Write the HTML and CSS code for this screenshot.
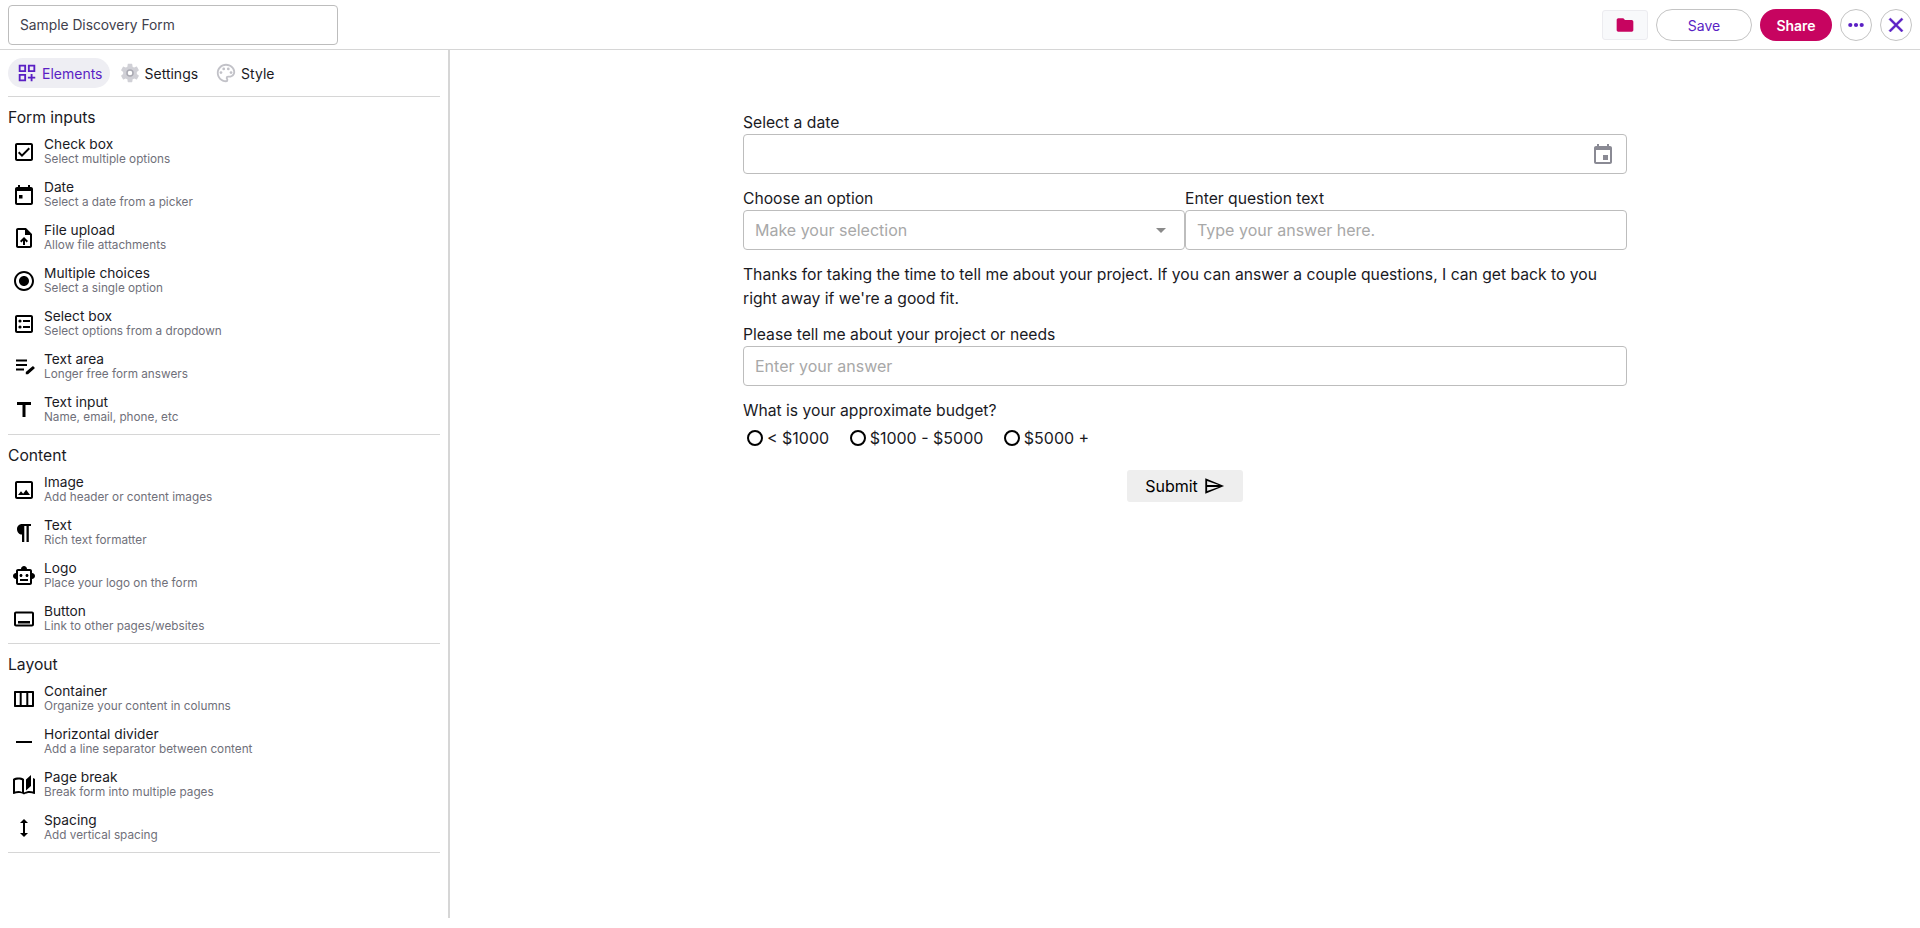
FILE: index.html
```html
<!DOCTYPE html>
<html lang="en">
<head>
<meta charset="utf-8">
<title>Sample Discovery Form</title>
<link rel="stylesheet" href="styles.css">
</head>
<body>
<div class="app">
  <header class="topbar">
    <input class="title-input" type="text" value="Sample Discovery Form">
    <div class="actions">
      <button class="folder-btn"><svg viewBox="0 0 24 24" class="i20"><path d="M10 4H4c-1.100 0-1.990.9-1.990 2L2 18c0 1.100.9 2 2 2h16c1.100 0 2-.9 2-2V8c0-1.100-.9-2-2-2h-8l-2-2z"/></svg></button>
      <button class="save-btn">Save</button>
      <button class="share-btn">Share</button>
      <button class="circle-btn"><svg viewBox="0 0 24 24" class="i24"><circle cx="6.300" cy="12" r="2.100"/><circle cx="12" cy="12" r="2.100"/><circle cx="17.700" cy="12" r="2.100"/></svg></button>
      <button class="circle-btn"><svg viewBox="0 0 24 24" class="i24 thick"><path d="M19 6.410 17.590 5 12 10.590 6.410 5 5 6.410 10.590 12 5 17.590 6.410 19 12 13.410 17.590 19 19 17.590 13.410 12z"/></svg></button>
    </div>
  </header>
  <div class="workspace">
    <aside class="sidebar">
      <nav class="tabs">
        <a class="tab active"><svg viewBox="0 0 24 24" class="i22"><path d="M3 3h8v8H3zm2 2v4h4V5zM3 13h8v8H3zm2 2v4h4v-4zM13 3h8v8h-8zm2 2v4h4V5zM16 13h2v3h3v2h-3v3h-2v-3h-3v-2h3z" fill-rule="evenodd"/></svg>Elements</a>
        <a class="tab"><svg viewBox="0 0 24 24" class="i22 gear"><path d="M19.400 13c.04-.32.1-.66.1-1s-.06-.68-.1-1l2.100-1.650c.2-.15.25-.42.12-.64l-2-3.460c-.12-.22-.39-.3-.61-.22l-2.490 1c-.52-.4-1.060-.73-1.690-.98l-.37-2.650A.506.506 0 0 0 14 2h-4c-.25 0-.46.18-.5.42l-.37 2.650c-.63.25-1.170.59-1.690.98l-2.490-1c-.22-.09-.49 0-.61.22l-2 3.460c-.13.22-.07.49.12.64L4.570 11c-.04.32-.07.66-.07 1s.03.68.07 1l-2.110 1.650c-.19.15-.25.42-.12.64l2 3.460c.12.22.39.3.61.22l2.490-1c.52.4 1.060.73 1.690.98l.37 2.650c.04.24.25.42.5.42h4c.25 0 .46-.18.5-.42l.37-2.650c.63-.25 1.170-.59 1.690-.98l2.490 1c.22.09.49 0 .61-.22l2-3.460c.12-.22.07-.49-.12-.64L19.400 13z"/><circle class="gear-hub" cx="12" cy="12" r="3.300"/></svg>Settings</a>
        <a class="tab"><svg viewBox="0 0 24 24" class="i22 gray"><path d="M12 22C6.490 22 2 17.510 2 12S6.490 2 12 2s10 4.040 10 9c0 3.310-2.690 6-6 6h-1.770c-.280 0-.5.220-.5.5 0 .120.050.230.130.330.410.470.640 1.060.640 1.670A2.500 2.500 0 0 1 12 22zm0-18c-4.410 0-8 3.590-8 8s3.590 8 8 8c.280 0 .5-.220.5-.5a.540.540 0 0 0-.140-.350c-.410-.460-.630-1.050-.630-1.650a2.500 2.500 0 0 1 2.500-2.500H16c2.210 0 4-1.790 4-4 0-3.860-3.590-7-8-7z"/><circle cx="6.500" cy="11.500" r="1.500"/><circle cx="9.500" cy="7.500" r="1.500"/><circle cx="14.500" cy="7.500" r="1.500"/><circle cx="17.500" cy="11.500" r="1.500"/></svg>Style</a>
      </nav>

      <section class="group">
        <h2>Form inputs</h2>
        <div class="item"><svg viewBox="0 0 24 24"><path d="M19 3H5c-1.100 0-2 .9-2 2v14c0 1.100.9 2 2 2h14c1.100 0 2-.9 2-2V5c0-1.100-.9-2-2-2zm0 16H5V5h14v14zM17.990 9l-1.410-1.420-6.590 6.590-2.580-2.570-1.420 1.410 4 3.990z"/></svg><div><b>Check box</b><small>Select multiple options</small></div></div>
        <div class="item"><svg viewBox="0 0 24 24"><path d="M19 4h-1V2h-2v2H8V2H6v2H5c-1.110 0-1.990.9-1.990 2L3 20c0 1.100.89 2 2 2h14c1.100 0 2-.9 2-2V6c0-1.100-.9-2-2-2zm0 16H5V8h14v12zM7 12h3.500v3.500H7z"/></svg><div><b>Date</b><small>Select a date from a picker</small></div></div>
        <div class="item"><svg viewBox="0 0 24 24"><path d="M14 2H6c-1.100 0-1.990.9-1.990 2L4 20c0 1.100.89 2 1.990 2H18c1.100 0 2-.9 2-2V8l-6-6zm4 18H6V4h7v5h5v11zM8 15.010l1.410 1.410L11 14.840V19h2v-4.160l1.590 1.590L16 15.010 12.010 11z"/></svg><div><b>File upload</b><small>Allow file attachments</small></div></div>
        <div class="item"><svg viewBox="0 0 24 24"><path d="M12 7c-2.760 0-5 2.240-5 5s2.240 5 5 5 5-2.240 5-5-2.240-5-5-5zm0-5C6.480 2 2 6.480 2 12s4.480 10 10 10 10-4.480 10-10S17.520 2 12 2zm0 18c-4.420 0-8-3.580-8-8s3.580-8 8-8 8 3.580 8 8-3.580 8-8 8z"/></svg><div><b>Multiple choices</b><small>Select a single option</small></div></div>
        <div class="item"><svg viewBox="0 0 24 24"><path d="M19 3H5c-1.100 0-2 .9-2 2v14c0 1.100.9 2 2 2h14c1.100 0 2-.9 2-2V5c0-1.100-.9-2-2-2zm0 16H5V5h14v14zM11 8h7v2h-7zm0 6h7v2h-7z"/><circle cx="8" cy="9" r="1.600"/><circle cx="8" cy="15" r="1.600"/></svg><div><b>Select box</b><small>Select options from a dropdown</small></div></div>
        <div class="item"><svg viewBox="0 0 24 24"><path d="M4 4.500h11v2H4zm0 4.500h11v2H4zm0 4.500h8v2H4zM21.500 11.500l1 1c.3.3.3.7 0 1l-6.500 5.800h-2.200v-2.300l6.500-5.500c.3-.3.9-.3 1.200 0z"/></svg><div><b>Text area</b><small>Longer free form answers</small></div></div>
        <div class="item"><svg viewBox="0 0 24 24"><path d="M5 4v3h5.500v12h3V7H19V4z"/></svg><div><b>Text input</b><small>Name, email, phone, etc</small></div></div>
      </section>

      <section class="group">
        <h2>Content</h2>
        <div class="item"><svg viewBox="0 0 24 24"><path d="M19 5v14H5V5h14m0-2H5c-1.100 0-2 .9-2 2v14c0 1.100.9 2 2 2h14c1.100 0 2-.9 2-2V5c0-1.100-.9-2-2-2zm-4.860 8.860l-3 3.870L9 13.140 6 17h12l-3.860-5.140z"/></svg><div><b>Image</b><small>Add header or content images</small></div></div>
        <div class="item"><svg viewBox="0 0 24 24"><path d="M10 13.500v7.500h2.300V5h2.200v16h2.300V5H19V3H10C7.200 3 5 5.200 5 8.200s2.200 5.300 5 5.300z"/></svg><div><b>Text</b><small>Rich text formatter</small></div></div>
        <div class="item"><svg viewBox="0 0 24 24"><path d="M20 9V7c0-1.100-.9-2-2-2h-3c0-1.660-1.340-3-3-3S9 3.340 9 5H6c-1.100 0-2 .9-2 2v2c-1.660 0-3 1.340-3 3s1.340 3 3 3v4c0 1.100.9 2 2 2h12c1.100 0 2-.9 2-2v-4c1.660 0 3-1.340 3-3s-1.340-3-3-3zm-2 10H6V7h12v12zm-9-6c-.83 0-1.500-.67-1.500-1.500S8.170 10 9 10s1.500.67 1.500 1.500S9.830 13 9 13zm7.500-1.500c0 .83-.67 1.500-1.500 1.500s-1.500-.67-1.500-1.500.67-1.500 1.500-1.500 1.500.67 1.500 1.500zM8 15h8v2H8v-2z"/></svg><div><b>Logo</b><small>Place your logo on the form</small></div></div>
        <div class="item"><svg viewBox="0 0 24 24"><path d="M20 4.500H4c-1.100 0-2 .9-2 2v11c0 1.100.9 2 2 2h16c1.100 0 2-.9 2-2v-11c0-1.100-.9-2-2-2zm0 13H4v-11h16zM6 14h12v2.500H6z"/></svg><div><b>Button</b><small>Link to other pages/websites</small></div></div>
      </section>

      <section class="group">
        <h2>Layout</h2>
        <div class="item"><svg viewBox="0 0 24 24"><path d="M3 4h18c.6 0 1 .4 1 1v14c0 .6-.4 1-1 1H3c-.6 0-1-.4-1-1V5c0-.6.4-1 1-1zm1 2v12h3.700V6zm5.700 0v12h4.600V6zm6.600 0v12H20V6z" fill-rule="evenodd"/></svg><div><b>Container</b><small>Organize your content in columns</small></div></div>
        <div class="item"><svg viewBox="0 0 24 24"><path d="M4 11h16v2H4z"/></svg><div><b>Horizontal divider</b><small>Add a line separator between content</small></div></div>
        <div class="item"><svg viewBox="0 0 24 24"><path d="M19 2l-5 4.500v11l5-4.500zM1 6v14.600c.1.400.4.500.8.400C3.200 20.400 5 20 6.500 20c1.900 0 4 .4 5.500 1.500 1.400-1 3.600-1.500 5.500-1.500 1.700 0 3.300.3 4.700 1 .4.200.8 0 .8-.4V6c-.6-.4-1.200-.7-2-1v13.500c-1-.3-2.300-.5-3.500-.5-1.700 0-4.100.6-5.500 1.500V6c-1.500-1.100-3.500-1.500-5.500-1.500S2.500 4.900 1 6zm2 1.200c1-.5 2.300-.7 3.500-.7 1.400 0 2.700.3 3.500.8V19c-1.100-.6-2.200-1-3.500-1-1.200 0-2.500.2-3.500.5z" fill-rule="evenodd"/></svg><div><b>Page break</b><small>Break form into multiple pages</small></div></div>
        <div class="item"><svg viewBox="0 0 24 24"><path d="M13 6.990h3L12 3 8 6.990h3v10.020H8L12 21l4-3.990h-3z"/></svg><div><b>Spacing</b><small>Add vertical spacing</small></div></div>
      </section>
    </aside>

    <main class="canvas">
      <form class="form">
        <div class="field">
          <label>Select a date</label>
          <div class="control"><input type="text"><svg viewBox="0 0 24 24" class="cal"><path d="M19 4h-1V2h-2v2H8V2H6v2H5c-1.110 0-1.990.9-1.990 2L3 20c0 1.100.89 2 2 2h14c1.100 0 2-.9 2-2V6c0-1.100-.9-2-2-2zm0 16H5V8h14v12zm-7-7h5v5h-5z"/></svg></div>
        </div>
        <div class="two">
          <div class="field">
            <label>Choose an option</label>
            <div class="control"><input type="text" placeholder="Make your selection"><span class="caret"></span></div>
          </div>
          <div class="field">
            <label>Enter question text</label>
            <div class="control"><input type="text" placeholder="Type your answer here."></div>
          </div>
        </div>
        <p class="intro">Thanks for taking the time to tell me about your project. If you can answer a couple questions, I can get back to you right away if we're a good fit.</p>
        <div class="field">
          <label>Please tell me about your project or needs</label>
          <div class="control"><input type="text" placeholder="Enter your answer"></div>
        </div>
        <div class="field budget">
          <label>What is your approximate budget?</label>
          <div class="radios">
            <span class="radio"><input type="radio" name="budget">&lt; $1000</span>
            <span class="radio"><input type="radio" name="budget">$1000 - $5000</span>
            <span class="radio"><input type="radio" name="budget">$5000 +</span>
          </div>
        </div>
        <div class="submit-row">
          <button type="button" class="submit">Submit<svg viewBox="0 0 24 24"><path d="M2.500 3.500 23 12 2.500 20.500zM4.500 6.500V11H17zM4.500 13v4.500L17 13z" fill-rule="evenodd"/></svg></button>
        </div>
      </form>
    </main>
  </div>
</div>
</body>
</html>
```

FILE: styles.css
```css
* { box-sizing: border-box; }
html, body { margin: 0; padding: 0; background: #fff; }
body { font-family: Inter, "Noto Sans", sans-serif; color: #1a1a1f; }
button { font-family: inherit; cursor: pointer; }
.app { height: 918px; display: flex; flex-direction: column; }

.topbar { height: 50px; flex: none; display: flex; align-items: center; justify-content: space-between; padding: 0 8px; border-bottom: 1px solid #d6d6d6; }
.title-input { width: 330px; height: 40px; margin-top: 1px; padding: 0 11px; border: 1px solid #bdbdbd; border-radius: 4px; font: 13.8px Inter, sans-serif; color: #41414d; outline: none; }
.actions { display: flex; align-items: center; gap: 8px; margin-top: 1px; }
.folder-btn { width: 46px; height: 30px; padding: 0; display: flex; align-items: center; justify-content: center; background: #f8f9fb; border: 1px solid #ececf0; border-radius: 3px; fill: #c70460; }
.save-btn { width: 96px; height: 32px; padding: 0; background: #fff; border: 1px solid #c4c4c4; border-radius: 16px; color: #5a1fc4; font-size: 14px; font-weight: 400; }
.share-btn { width: 72px; height: 32px; padding: 0; background: #c70460; border: 0; border-radius: 16px; color: #fff; font-size: 14px; font-weight: 600; }
.circle-btn { width: 32px; height: 32px; padding: 0; display: flex; align-items: center; justify-content: center; background: #fff; border: 1px solid #c4c4c4; border-radius: 50%; fill: #5a1fc4; }
.i20 { width: 20px; height: 20px; }
.i22 { width: 22px; height: 22px; flex: none; }
.i24 { width: 24px; height: 24px; }
.thick { stroke: #5a1fc4; stroke-width: .5; }

.workspace { flex: 1; display: flex; min-height: 0; }
.sidebar { width: 450px; flex: none; padding: 0 8px; border-right: 2px solid #d6d6d6; }
.tabs { display: flex; align-items: center; gap: 1px; height: 47px; border-bottom: 1px solid #d6d6d6; }
.tab { height: 30px; display: flex; align-items: center; gap: 4px; padding: 0 8px; border-radius: 15px; font-size: 14px; color: #1a1a1f; fill: currentColor; font-weight: 400; }
.tab.active { background: #eeeef3; color: #5a1fc4; padding-right: 7px; }
.gray { fill: #c2c2c8; }
.gear { fill: #d0d0d6; }
.gear-hub { fill: #fff; stroke: #a9a9b2; stroke-width: 1.6; }

.group { border-bottom: 1px solid #d6d6d6; padding: 11px 0 3px; }
.group h2 { margin: 0 0 2px; font-size: 15.68px; line-height: 20px; font-weight: 400; color: #1a1a1f; }
.item { height: 43px; display: flex; align-items: center; gap: 8px; padding-left: 4px; }
.item svg { width: 24px; height: 24px; flex: none; fill: #000; }
.item b { display: block; font-size: 13.72px; line-height: 16px; font-weight: 400; color: #1a1a1f; }
.item small { display: block; font-size: 11.76px; line-height: 15px; color: #70707a; }

.canvas { flex: 1; min-width: 0; display: flex; justify-content: center; padding-top: 60px; }
.form { width: 884px; font-size: 15.68px; }
.field label { display: block; font-size: 15.68px; line-height: 26px; height: 24px; color: #1a1a1f; }
.two { display: grid; grid-template-columns: 1fr 1fr; margin-top: 12px; }
.control { position: relative; }
.control input { display: block; width: 100%; height: 40px; padding: 0 11px; border: 1px solid #bdbdbd; border-radius: 4px; font: 16px Inter, sans-serif; outline: none; background: #fff; }
.control input::placeholder { color: #a8a8a8; opacity: 1; }
.cal { position: absolute; right: 12px; top: 8px; width: 24px; height: 24px; fill: #8a8a94; }
.caret { position: absolute; right: 19px; top: 18px; width: 0; height: 0; border-left: 5px solid transparent; border-right: 5px solid transparent; border-top: 5px solid #8a8a8a; }
.intro { margin: 13px 0 11px; font-size: 15.68px; line-height: 24px; color: #1a1a1f; }
.budget { margin-top: 12px; }
.radios { display: flex; gap: 20.5px; padding-left: 4px; height: 32px; align-items: center; }
.radio { display: flex; align-items: center; gap: 4px; font-size: 16px; color: #1a1a1f; }
.radio input { appearance: none; margin: 0; width: 16px; height: 16px; border: 2px solid #000; border-radius: 50%; background: #fff; }
.submit-row { display: flex; justify-content: center; margin-top: 16px; }
.submit { display: flex; align-items: center; gap: 5px; width: 116px; height: 32px; justify-content: center; padding: 0; background: #eeeeee; border: 0; border-radius: 3px; font-size: 16px; color: #000; font-weight: 400; }
.submit svg { width: 22px; height: 22px; fill: #000; }
```
